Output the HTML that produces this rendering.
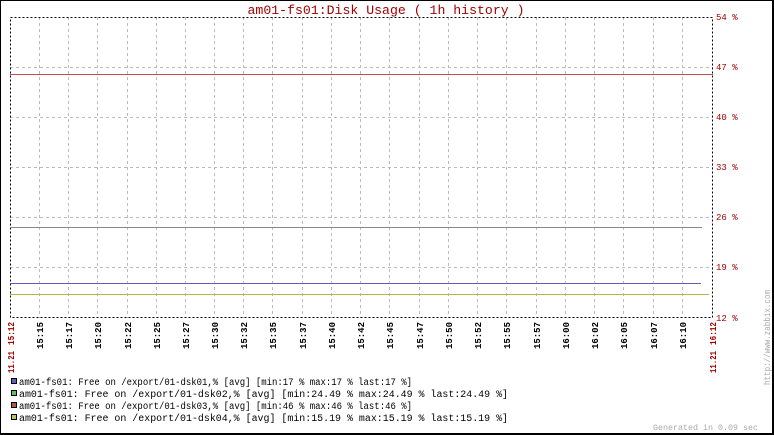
<!DOCTYPE html><html><head><meta charset="utf-8"><style>html,body{margin:0;padding:0;background:#fff}svg{display:block}text{font-family:"Liberation Mono",monospace}</style></head><body>
<svg width="774" height="435" xmlns="http://www.w3.org/2000/svg">
<rect x="0.5" y="0.5" width="772" height="433" fill="#fff" stroke="#000"/>
<line x1="773" y1="0" x2="773" y2="435" stroke="#000" stroke-width="2"/>
<line x1="0" y1="434" x2="774" y2="434" stroke="#000" stroke-width="2"/>
<text x="386" y="14" fill="#a00000" font-size="13" text-anchor="middle" textLength="277" lengthAdjust="spacingAndGlyphs">am01-fs01:Disk Usage ( 1h history )</text>
<g stroke="#bbb" stroke-dasharray="3,3" stroke-width="1">
<line x1="10" y1="67.5" x2="713" y2="67.5"/><line x1="10" y1="117.5" x2="713" y2="117.5"/><line x1="10" y1="167.5" x2="713" y2="167.5"/><line x1="10" y1="217.5" x2="713" y2="217.5"/><line x1="10" y1="267.5" x2="713" y2="267.5"/>
<line x1="39.5" y1="17" x2="39.5" y2="318"/><line x1="68.5" y1="17" x2="68.5" y2="318"/><line x1="97.5" y1="17" x2="97.5" y2="318"/><line x1="127.5" y1="17" x2="127.5" y2="318"/><line x1="156.5" y1="17" x2="156.5" y2="318"/><line x1="185.5" y1="17" x2="185.5" y2="318"/><line x1="214.5" y1="17" x2="214.5" y2="318"/><line x1="243.5" y1="17" x2="243.5" y2="318"/><line x1="272.5" y1="17" x2="272.5" y2="318"/><line x1="302.5" y1="17" x2="302.5" y2="318"/><line x1="331.5" y1="17" x2="331.5" y2="318"/><line x1="360.5" y1="17" x2="360.5" y2="318"/><line x1="389.5" y1="17" x2="389.5" y2="318"/><line x1="419.5" y1="17" x2="419.5" y2="318"/><line x1="448.5" y1="17" x2="448.5" y2="318"/><line x1="477.5" y1="17" x2="477.5" y2="318"/><line x1="506.5" y1="17" x2="506.5" y2="318"/><line x1="536.5" y1="17" x2="536.5" y2="318"/><line x1="565.5" y1="17" x2="565.5" y2="318"/><line x1="594.5" y1="17" x2="594.5" y2="318"/><line x1="623.5" y1="17" x2="623.5" y2="318"/><line x1="653.5" y1="17" x2="653.5" y2="318"/><line x1="682.5" y1="17" x2="682.5" y2="318"/>
</g>
<g stroke="#000" stroke-dasharray="2,2" fill="none"><rect x="10.5" y="17.5" width="702" height="300"/></g>
<line x1="10" y1="74.5" x2="713" y2="74.5" stroke="#c05050"/>
<line x1="10" y1="227.5" x2="702" y2="227.5" stroke="#888"/>
<line x1="10" y1="283.5" x2="701" y2="283.5" stroke="#6060b8"/>
<line x1="10" y1="294.5" x2="709" y2="294.5" stroke="#b8b840"/>
<g fill="#a00000" font-size="9"><text x="716" y="20">54 %</text><text x="716" y="70">47 %</text><text x="716" y="120">40 %</text><text x="716" y="170">33 %</text><text x="716" y="220">26 %</text><text x="716" y="270">19 %</text><text x="716" y="321">12 %</text></g>
<g font-size="9" font-weight="bold" text-anchor="end">
<text transform="translate(14,322) rotate(-90)" fill="#a00000" textLength="23" lengthAdjust="spacingAndGlyphs">15:12</text>
<text transform="translate(14,351) rotate(-90)" fill="#a00000" textLength="22" lengthAdjust="spacingAndGlyphs">11.21</text>
<text transform="translate(716,322) rotate(-90)" fill="#a00000" textLength="23" lengthAdjust="spacingAndGlyphs">16:12</text>
<text transform="translate(716,351) rotate(-90)" fill="#a00000" textLength="22" lengthAdjust="spacingAndGlyphs">11.21</text>
<text transform="translate(43,322) rotate(-90)">15:15</text><text transform="translate(72,322) rotate(-90)">15:17</text><text transform="translate(101,322) rotate(-90)">15:20</text><text transform="translate(131,322) rotate(-90)">15:22</text><text transform="translate(160,322) rotate(-90)">15:25</text><text transform="translate(189,322) rotate(-90)">15:27</text><text transform="translate(218,322) rotate(-90)">15:30</text><text transform="translate(247,322) rotate(-90)">15:32</text><text transform="translate(276,322) rotate(-90)">15:35</text><text transform="translate(306,322) rotate(-90)">15:37</text><text transform="translate(335,322) rotate(-90)">15:40</text><text transform="translate(364,322) rotate(-90)">15:42</text><text transform="translate(393,322) rotate(-90)">15:45</text><text transform="translate(423,322) rotate(-90)">15:47</text><text transform="translate(452,322) rotate(-90)">15:50</text><text transform="translate(481,322) rotate(-90)">15:52</text><text transform="translate(510,322) rotate(-90)">15:55</text><text transform="translate(540,322) rotate(-90)">15:57</text><text transform="translate(569,322) rotate(-90)">16:00</text><text transform="translate(598,322) rotate(-90)">16:02</text><text transform="translate(627,322) rotate(-90)">16:05</text><text transform="translate(657,322) rotate(-90)">16:07</text><text transform="translate(686,322) rotate(-90)">16:10</text>
</g>
<text transform="translate(770,385) rotate(-90)" fill="#aaa" font-size="9" textLength="95" lengthAdjust="spacingAndGlyphs">http://www.zabbix.com</text>
<text x="653" y="430" fill="#aaa" font-size="8" textLength="105" lengthAdjust="spacingAndGlyphs">Generated in 0.09 sec</text>
<g stroke="#000" stroke-width="1"><rect x="11.5" y="378.5" width="5" height="5" fill="#6060c0"/><rect x="11.5" y="390.5" width="5" height="5" fill="#60c060"/><rect x="11.5" y="402.5" width="5" height="5" fill="#c05050"/><rect x="11.5" y="414.5" width="5" height="5" fill="#c0c060"/></g>
<g font-size="9.7">
<text x="19" y="385" textLength="393" lengthAdjust="spacingAndGlyphs">am01-fs01: Free on /export/01-dsk01,% [avg] [min:17 % max:17 % last:17 %]</text>
<text x="19" y="397" textLength="489" lengthAdjust="spacingAndGlyphs">am01-fs01: Free on /export/01-dsk02,% [avg] [min:24.49 % max:24.49 % last:24.49 %]</text>
<text x="19" y="409" textLength="393" lengthAdjust="spacingAndGlyphs">am01-fs01: Free on /export/01-dsk03,% [avg] [min:46 % max:46 % last:46 %]</text>
<text x="19" y="421" textLength="489" lengthAdjust="spacingAndGlyphs">am01-fs01: Free on /export/01-dsk04,% [avg] [min:15.19 % max:15.19 % last:15.19 %]</text>
</g>
</svg></body></html>
